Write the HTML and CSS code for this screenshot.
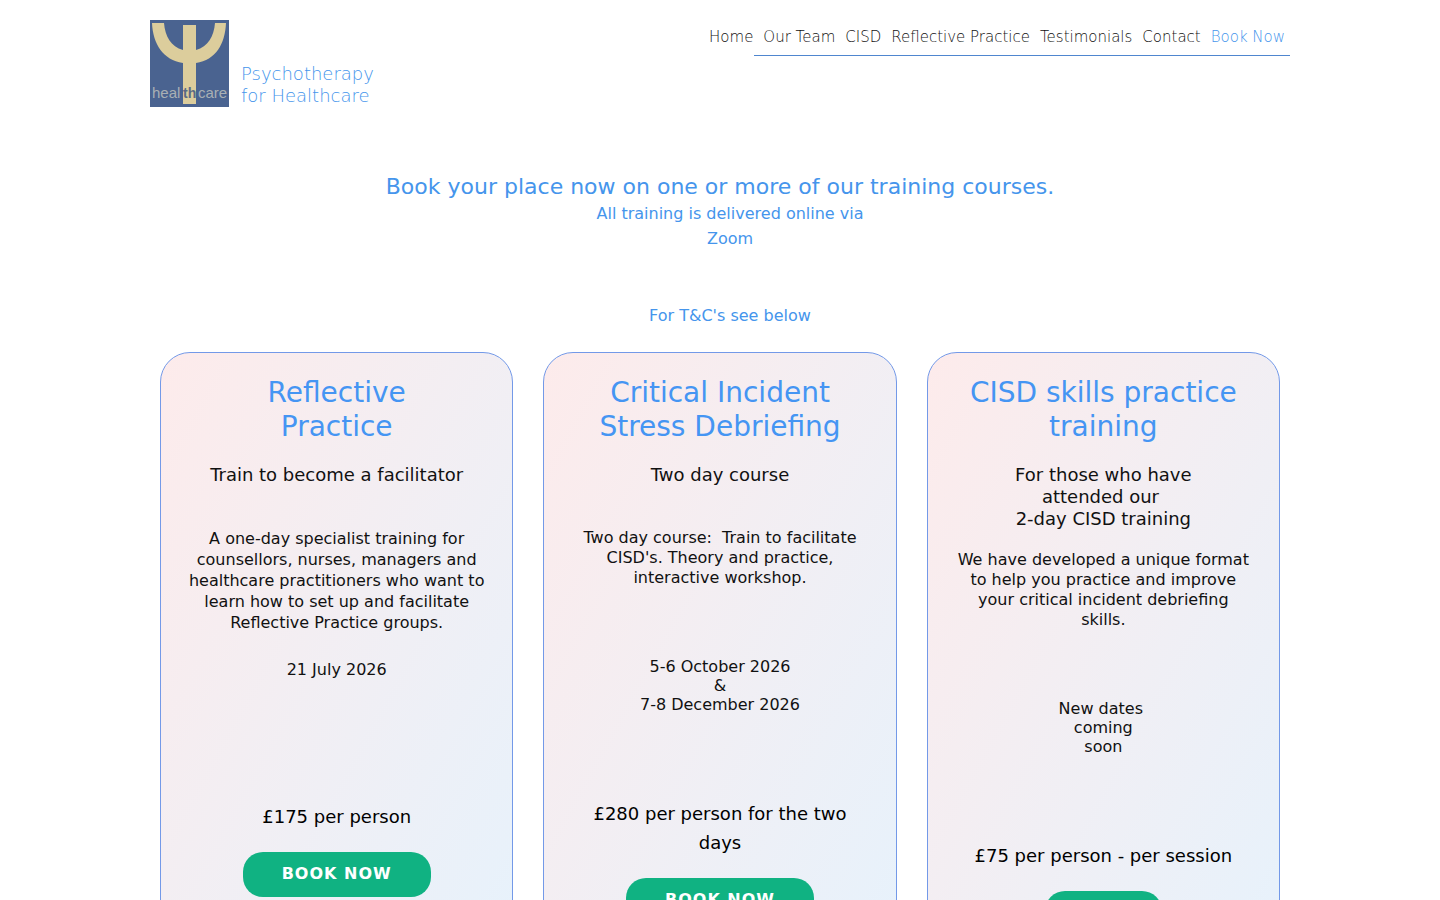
FILE: index.html
```html
<!DOCTYPE html>
<html lang="en">
<head>
    <meta charset="UTF-8">
    <meta name="viewport" content="width=device-width, initial-scale=1.0">
    <title>Book Now - Psychotherapy for Healthcare</title>
    <link rel="stylesheet" href="styles.css">
</head>
<body>
    <header class="header">
        <a class="brand" href="#">
            <svg class="logo" viewBox="0 0 79 87" role="img" aria-label="Healthcare logo">
                <rect width="79" height="87" fill="#4a6390"/>
                <path d="M2 3H14C15 16 21 27 33 30V5H46V30C58 27 64 16 65 3H76C75 24 66 40 46 43V84H33V43C13 40 3 24 2 3Z" fill="#dccd9c"/>
                <text class="logo-text" x="2" y="78" fill="#a9b0b4">heal</text>
                <text class="logo-text logo-text-dark" x="33" y="78" fill="#5b6b85">th</text>
                <text class="logo-text" x="48" y="78" fill="#a9b0b4">care</text>
            </svg>
            <span class="brand-name">Psychotherapy<br>for Healthcare</span>
        </a>
        <nav class="nav">
            <a href="#">Home</a>
            <a href="#">Our Team</a>
            <a href="#">CISD</a>
            <a href="#">Reflective Practice</a>
            <a href="#">Testimonials</a>
            <a href="#">Contact</a>
            <a href="#" class="active">Book Now</a>
        </nav>
    </header>

    <main>
        <section class="intro">
            <h1>Book your place now on one or more of our training courses.</h1>
            <p>All training is delivered online via<br>Zoom</p>
            <p class="terms">For T&amp;C's see below</p>
        </section>

        <section class="courses">
            <article class="card">
                <h2>Reflective<br>Practice</h2>
                <h3>Train to become a facilitator</h3>
                <p class="description long">A one-day specialist training for counsellors, nurses, managers and healthcare practitioners who want to learn how to set up and facilitate Reflective Practice groups.</p>
                <p class="dates">21 July 2026</p>
                <p class="price">£175 per person</p>
                <button type="button">BOOK NOW</button>
            </article>

            <article class="card">
                <h2>Critical Incident Stress Debriefing</h2>
                <h3>Two day course</h3>
                <p class="description">Two day course:&nbsp; Train to facilitate CISD's. Theory and practice, interactive workshop.</p>
                <p class="dates">5-6 October 2026<br>&amp;<br>7-8 December 2026</p>
                <p class="price">£280 per person for the two days</p>
                <button type="button">BOOK NOW</button>
            </article>

            <article class="card">
                <h2>CISD skills practice training</h2>
                <h3>For those who have<br>attended our&nbsp;<br>2-day CISD training</h3>
                <p class="description">We have developed a unique format to help you practice and improve your critical incident debriefing skills.</p>
                <p class="dates">New dates&nbsp;<br>coming<br>soon</p>
                <p class="price">£75 per person - per session</p>
                <button type="button">Info</button>
            </article>
        </section>
    </main>
</body>
</html>
```

FILE: styles.css
```css
* {
    box-sizing: border-box;
}

body {
    margin: 0;
    font-family: "DejaVu Sans", sans-serif;
    font-size: 16px;
    color: #111;
    background-color: #fff;
}

h1,
h2,
h3,
p {
    margin: 0;
    font-weight: normal;
}

/* Header */
.header {
    display: flex;
    justify-content: space-between;
    align-items: flex-start;
    max-width: 1140px;
    margin: 0 auto;
    padding-top: 20px;
}

.brand {
    display: flex;
    align-items: flex-end;
    gap: 12px;
    color: #4595ec;
    text-decoration: none;
}

.logo {
    width: 79px;
    height: 87px;
}

.logo-text {
    font-family: "Liberation Sans", sans-serif;
    font-size: 15px;
}

.logo-text-dark {
    font-weight: bold;
    font-size: 14px;
}

.brand-name {
    font-size: 18px;
    line-height: 22px;
    font-weight: 200;
}

.nav {
    display: flex;
    justify-content: flex-end;
    gap: 10px;
    width: 47%;
    padding: 7px 5px 7px 0;
    border-bottom: 1px solid #4f86cf;
}

.nav a {
    font-size: 15px;
    line-height: 21px;
    font-weight: 200;
    color: #111;
    text-decoration: none;
    white-space: nowrap;
}

.nav a.active {
    color: #4595ec;
}

/* Intro */
.intro {
    margin-top: 66px;
    text-align: center;
    color: #4595ec;
}

.intro h1 {
    font-size: 22px;
    line-height: 28px;
}

.intro p {
    padding-left: 20px;
    line-height: 25px;
}

.intro .terms {
    margin-top: 52px;
}

/* Courses */
.courses {
    display: grid;
    grid-template-columns: repeat(3, 1fr);
    gap: 30px;
    max-width: 1120px;
    margin: 24px auto 60px;
}

.card {
    padding: 23px 26px 50px;
    border: 1px solid #7399e8;
    border-radius: 30px;
    background: linear-gradient(to bottom right, #fdebeb, #e6f2fc);
    text-align: center;
}

.card h2 {
    font-size: 28px;
    line-height: 34px;
    color: #4595f3;
}

.card h3 {
    min-height: 44px;
    margin: 20px 0;
    font-size: 18px;
    line-height: 22px;
}

.description {
    margin-bottom: 69px;
    line-height: 20px;
}

.description.long {
    margin-bottom: 27px;
    line-height: 21px;
}

.dates {
    min-height: 142px;
    line-height: 19px;
}

.price {
    margin-bottom: 21px;
    font-size: 18px;
    line-height: 29px;
    color: #000;
}

.card button {
    height: 45px;
    padding: 0 39px 3px;
    border: none;
    border-radius: 20px;
    background-color: #10b282;
    color: #fff;
    font-family: inherit;
    font-size: 16px;
    font-weight: bold;
    letter-spacing: 1px;
    cursor: pointer;
}

@media (max-width: 1000px) {
    .header {
        flex-direction: column;
        padding: 20px;
    }

    .nav {
        flex-wrap: wrap;
        justify-content: flex-start;
        width: 100%;
    }

    .courses {
        grid-template-columns: 1fr;
        padding: 0 20px;
    }
}
```
